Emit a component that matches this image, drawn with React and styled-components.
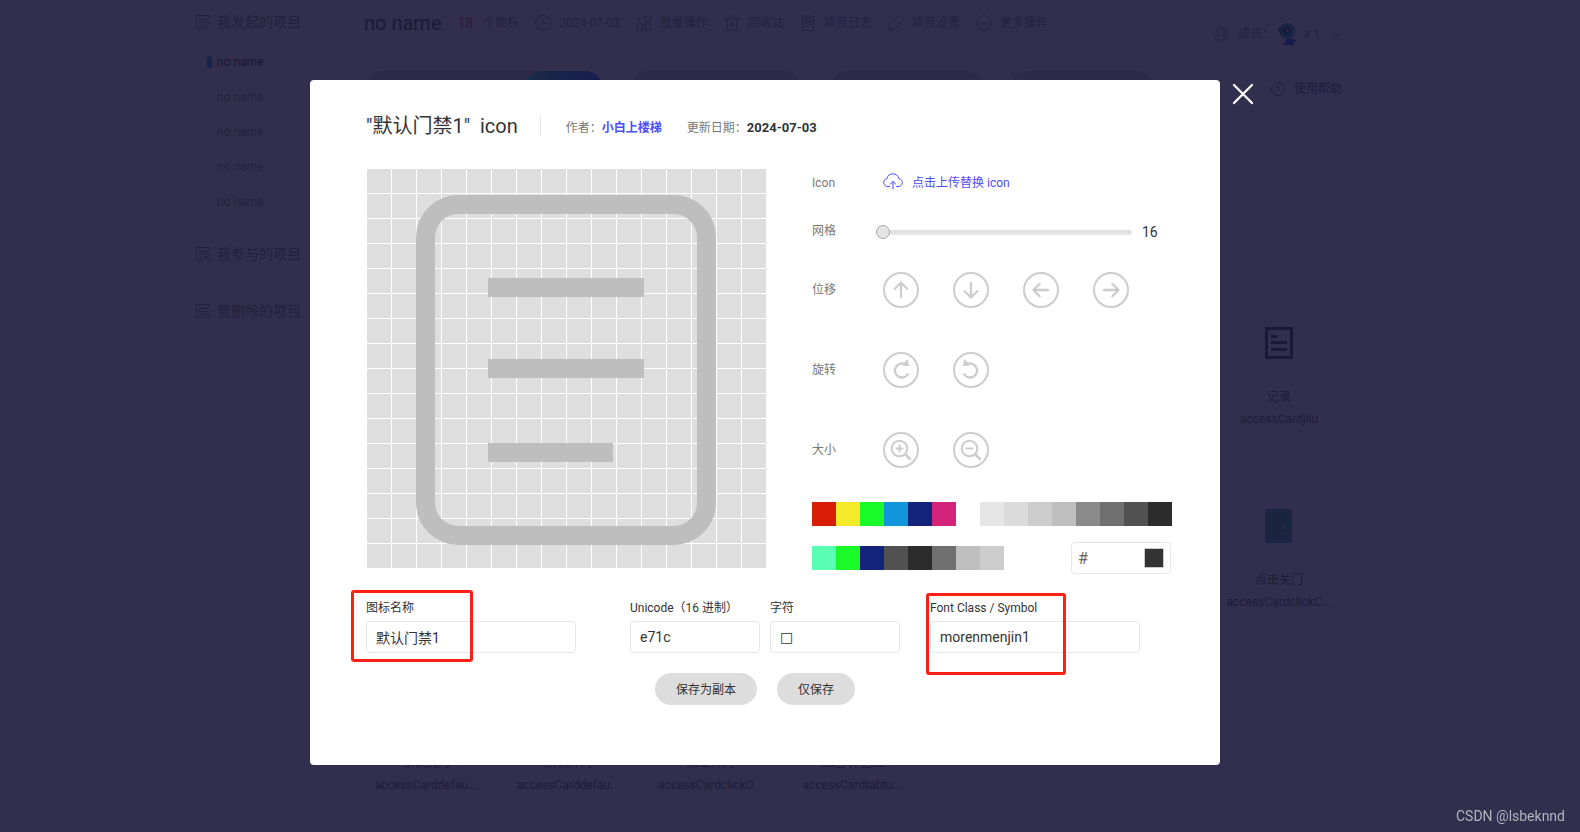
import React, { Fragment } from "react";
import styled, { createGlobalStyle } from "styled-components";

const GlobalStyle = createGlobalStyle`
  * {
    box-sizing: border-box;
  }
  body {
    margin: 0;
    background: #fff;
    font-family: Roboto, "Noto Sans CJK SC", sans-serif;
    font-size: 12px;
    line-height: 20px;
    color: #333;
  }
  button, input {
    font-family: inherit;
    color: inherit;
  }
  svg {
    display: block;
    flex: none;
  }
`;

/* ---------- project page ---------- */

const Page = styled.div`
  display: flex;
  justify-content: center;
  height: 100vh;
  overflow: hidden;
  padding: 12px 43px 0 0;
`;

const Sidebar = styled.nav`
  flex: none;
  width: 138px;
  border-right: 1px solid #eee;
`;

const Group = styled.section`
  margin-bottom: 25px;
`;

const GroupTitle = styled.h2`
  display: flex;
  align-items: center;
  gap: 6px;
  margin: 0;
  padding-bottom: 12px;
  font-size: 14px;
  font-weight: 400;
  line-height: 20px;
  color: #666;
`;

const ProjectList = styled.ul`
  list-style: none;
  margin: 0;
  padding: 0 0 0 12px;
`;

const Project = styled.li`
  display: flex;
  align-items: center;
  gap: 5px;
  height: 35px;
  color: ${props => (props.$active ? "#000" : "#666")};
  &::before {
    content: "";
    width: 5px;
    height: 12px;
    border-radius: 2px;
    background: ${props => (props.$active ? "linear-gradient(#1cc, #04f)" : "none")};
  }
`;

const Content = styled.main`
  flex: none;
  width: 1009px;
  padding-left: 31px;
`;

const TopBar = styled.header`
  display: flex;
  justify-content: space-between;
  height: 59px;
`;

const Toolbar = styled.div`
  display: flex;
  align-items: center;
  height: 22px;
  color: #666;
`;

const ProjectName = styled.h1`
  margin: 0 16px 0 0;
  font-size: 20px;
  font-weight: 400;
  color: #222;
`;

const Count = styled.span`
  margin-right: 10px;
  font-size: 14px;
  color: #f00;
`;

const Tool = styled.span`
  display: flex;
  align-items: center;
  gap: 8px;
  margin-left: 16px;
`;

const Members = styled.div`
  display: flex;
  align-items: center;
  gap: 8px;
  height: 22px;
  margin-top: 11px;
  color: #666;
`;

const MemberLabel = styled.span`
  display: flex;
  align-items: center;
  gap: 4px;
`;

const MemberCount = styled.span`
  margin-right: 4px;
`;

const TabBar = styled.div`
  display: flex;
  align-items: center;
  gap: 27px;
  height: 36px;
`;

const Tab = styled.div`
  display: flex;
  justify-content: flex-end;
  width: ${props => props.$width}px;
  height: 36px;
  border-radius: 18px;
  background: #ccc;
`;

const TabActive = styled.div`
  width: 79px;
  border-radius: 18px;
  background: linear-gradient(90deg, #0cc, #04f);
`;

const Help = styled.a`
  display: flex;
  align-items: center;
  gap: 9px;
  margin-left: auto;
  color: #333;
  text-decoration: none;
`;

const IconGrid = styled.div`
  display: grid;
  grid-template-columns: repeat(7, 1fr);
  grid-auto-rows: 183px;
  margin: 193px -8px 0 -9px;
`;

const IconCard = styled.div`
  grid-row: ${props => props.$row};
  grid-column: ${props => props.$column};
  display: flex;
  flex-direction: column;
  align-items: center;
  padding-top: 27px;
  line-height: 22px;
`;

const Glyph = styled.div`
  display: flex;
  align-items: center;
  height: 32px;
  margin-bottom: 27px;
`;

/* ---------- dialog ---------- */

const Mask = styled.div`
  position: fixed;
  inset: 0;
  display: flex;
  justify-content: center;
  align-items: flex-start;
  padding: 80px 50px 0 0;
  background: rgba(27, 24, 58, 0.9);
`;

const Dialog = styled.div`
  position: relative;
  width: 910px;
  padding: 31px 48px 60px 56px;
  border-radius: 4px;
  background: #fff;
`;

const Close = styled.button`
  position: absolute;
  top: 3px;
  left: 100%;
  margin-left: 12px;
  padding: 0;
  border: 0;
  background: none;
  color: #fff;
`;

const DialogHeader = styled.header`
  display: flex;
  align-items: center;
  height: 30px;
  margin-bottom: 28px;
  color: #777;
`;

const DialogTitle = styled.h2`
  margin: 0 22px 0 0;
  font-size: 20px;
  font-weight: 400;
  line-height: 30px;
  color: #333;
  white-space: pre;
`;

const Meta = styled.span`
  display: flex;
  align-items: center;
  margin-right: 25px;
  padding-top: 4px;
  strong {
    font-size: 13px;
    color: #333;
  }
  a {
    font-weight: 700;
    color: #4d4dff;
    text-decoration: none;
  }
`;

const Divider = styled.span`
  width: 1px;
  height: 20px;
  margin-right: 25px;
  background: #e6e6e6;
`;

const Editor = styled.div`
  display: flex;
  justify-content: space-between;
  align-items: flex-start;
  padding-left: 1px;
`;

const Canvas = styled.div`
  width: 399px;
  height: 399px;
  background-color: #dedede;
  background-image:
    linear-gradient(90deg, transparent 24px, #fff 24px),
    linear-gradient(transparent 24px, #fff 24px);
  background-size: 25px 25px;
`;

const Controls = styled.div`
  width: 360px;
`;

const ControlRow = styled.div`
  display: flex;
  align-items: center;
  height: ${props => props.$height || 80}px;
  margin-bottom: ${props => props.$after || 0}px;
`;

const ControlLabel = styled.label`
  width: 71px;
  color: #777;
`;

const Upload = styled.a`
  display: flex;
  align-items: center;
  gap: 9px;
  color: #4d4dff;
  text-decoration: none;
`;

const Slider = styled.input`
  appearance: none;
  width: 256px;
  height: 14px;
  margin: 2px 10px 0 -7px;
  background: none;
  &::-webkit-slider-runnable-track {
    height: 5px;
    border-radius: 3px;
    background: linear-gradient(#ddd, #e8e8e8);
  }
  &::-webkit-slider-thumb {
    appearance: none;
    width: 14px;
    height: 14px;
    margin-top: -5px;
    border: 1px solid #aaa;
    border-radius: 50%;
    background: #e4e4e4;
  }
`;

const SliderValue = styled.output`
  padding-top: 2px;
  font-size: 14px;
`;

const RoundButtons = styled.div`
  display: flex;
  gap: 34px;
`;

const RoundButton = styled.button`
  display: flex;
  align-items: center;
  justify-content: center;
  width: 36px;
  height: 36px;
  padding: 0;
  border: 2px solid #ccc;
  border-radius: 50%;
  background: none;
  color: #ccc;
`;

const Palette = styled.div`
  display: flex;
  justify-content: space-between;
  align-items: center;
  margin-top: ${props => props.$top}px;
`;

const Swatches = styled.div`
  display: flex;
`;

const Swatch = styled.button`
  width: 24px;
  height: 24px;
  padding: 0;
  border: 0;
  background: ${props => props.$color};
`;

const ColorBox = styled.div`
  display: flex;
  align-items: center;
  width: 100px;
  height: 32px;
  margin-right: 1px;
  padding: 0 6px;
  border: 1px solid #e6e6e6;
  border-radius: 4px;
`;

const ColorInput = styled.input`
  flex: 1;
  min-width: 0;
  padding: 0;
  border: 0;
  outline: 0;
  background: none;
  font-size: 16px;
  color: #666;
`;

const ColorPreview = styled.span`
  width: 20px;
  height: 20px;
  border: 1px solid #ccc;
  background: #333;
`;

const Fields = styled.div`
  display: flex;
  gap: 30px;
  margin-top: 24px;
`;

const FieldPair = styled.div`
  display: flex;
  gap: 10px;
  padding-left: 24px;
`;

const Field = styled.div`
  position: relative;
  width: ${props => props.$width}px;
`;

const FieldLabel = styled.label`
  display: block;
  margin-bottom: 3px;
  line-height: 20px;
  white-space: nowrap;
`;

const TextInput = styled.input`
  display: block;
  width: 100%;
  height: 32px;
  padding: 0 9px;
  border: 1px solid #e6e6e6;
  border-radius: 4px;
  background: #fff;
  font-size: 14px;
`;

const CharInput = styled(TextInput)`
  font-family: "DejaVu Sans", sans-serif;
`;

const Highlight = styled.span`
  position: absolute;
  top: ${props => props.$top}px;
  left: ${props => props.$left}px;
  width: ${props => props.$width}px;
  height: ${props => props.$height}px;
  border: 3px solid #ff2015;
  border-radius: 3px;
  pointer-events: none;
`;

const Actions = styled.footer`
  display: flex;
  justify-content: center;
  gap: 20px;
  margin-top: 20px;
  padding-right: 28px;
`;

const PillButton = styled.button`
  height: 32px;
  padding: 0 21px 2px;
  border: 0;
  border-radius: 16px;
  background: #ddd;
  font-size: 12px;
`;

const Watermark = styled.span`
  position: fixed;
  right: 15px;
  bottom: 6px;
  font-size: 14px;
  color: #b4b3be;
`;

/* ---------- icons ---------- */

const Svg = ({ size = 16, width, height, stroke = 1, children }) => (
  <svg
    width={width || size}
    height={height || size}
    viewBox={`0 0 ${width || size} ${height || size}`}
    fill="none"
    stroke="currentColor"
    strokeWidth={stroke}
    strokeLinecap="round"
    strokeLinejoin="round"
    aria-hidden="true"
  >
    {children}
  </svg>
);

const groupMarks = {
  edit: <path d="M8 14l.5-2.500 4.500-4.500 2 2-4.500 4.500z" />,
  user: <path d="M11.500 6.500a2.200 2.200 0 1 1 0 4.400 2.200 2.200 0 0 1 0-4.400zM8 15c.3-2.500 1.700-3.800 3.500-3.800S14.700 12.500 15 15" />,
  remove: <path d="M11.500 8a3.500 3.500 0 1 1 0 7 3.500 3.500 0 0 1 0-7zM10.200 10.200l2.600 2.600M12.800 10.200l-2.600 2.600" />,
};

const GroupIcon = ({ mark }) => (
  <Svg>
    <path d="M14.500 4.500v-3h-11c-1.500 0-2 .5-2 2v9c0 1.500.5 2 2 2h3M1 1.500h2M4.500 5.500h7M4.500 8.500h3M4.500 11.500h2" />
    {groupMarks[mark]}
  </Svg>
);

const ClockIcon = () => (
  <Svg>
    <circle cx="8" cy="8" r="7.500" />
    <path d="M8 4v4.500h3.500" />
  </Svg>
);

const BatchIcon = () => (
  <Svg>
    <path d="M1 3.500l2 2 4-4M9.500 1h5.500v4.500a1 1 0 0 1-1 1H9.500zM1 9h5.500v6H2a1 1 0 0 1-1-1zM9.500 9H14a1 1 0 0 1 1 1v4a1 1 0 0 1-1 1H9.500z" />
  </Svg>
);

const TrashIcon = () => (
  <Svg>
    <path d="M1.500 4h13M5 4c0-2 1-3 3-3s3 1 3 3M3 4l.8 11h8.400L13 4M8 7.500l2 3.500H6z" />
  </Svg>
);

const LogIcon = () => (
  <Svg>
    <path d="M5.500 2h-3v13.500h11V2h-3M5.500 .8h5v2.400h-5zM5 6.500h6M5 9h6M5 11.500h3" />
  </Svg>
);

const PenIcon = () => (
  <Svg>
    <path d="M1 15.500l.3-5L10 1.500c.8-.8 1.600-.8 2.400 0l2.100 2.100c.8.8.8 1.600 0 2.400L6 15zM1.300 10.500L6 15" />
  </Svg>
);

const MoreIcon = () => (
  <Svg>
    <circle cx="8" cy="8" r="7.500" />
    <path d="M4.800 8h.2M7.900 8h.2M11 8h.2" strokeWidth="1.500" />
  </Svg>
);

const MembersIcon = () => (
  <Svg>
    <path d="M7 1.500c2 0 3.300 1.400 3.300 3.500S9 8.800 8.700 9.300c-.3.800 3.800 1.300 3.800 3.200 0 1-.7 1.500-1.500 1.500H2.500c-.8 0-1.500-.5-1.500-1.500 0-1.900 4.600-2.400 4.300-3.200C5 8.800 3.700 7.100 3.700 5S5 1.500 7 1.500zM11 1.500c3 .5 2.500 5 1 7 0 1 3 1 3 3" />
  </Svg>
);

const Avatar = () => (
  <svg width="18" height="22" viewBox="0 0 18 22" aria-hidden="true">
    <path d="M5 22l4-6h6l3 1-3 5z" fill="#02f" />
    <circle cx="9.500" cy="8" r="8" fill="#09a" />
    <circle cx="3" cy="7" r="3" fill="#067" />
    <circle cx="9" cy="7.500" r="3.500" fill="#024" />
    <circle cx="9" cy="7.500" r="1.500" fill="#bbb" />
  </svg>
);

const RecordGlyph = () => (
  <svg width="28" height="32" viewBox="0 0 28 32" aria-hidden="true">
    <path d="M1.500 1.500h25v29h-25z" fill="none" stroke="#222" strokeWidth="3" />
    <path d="M6 8h7v3H6zM6 14h16v3H6zM6 21h16v3H6z" fill="#222" />
  </svg>
);

const DoorGlyph = () => (
  <svg width="28" height="34" viewBox="0 0 28 34" aria-hidden="true">
    <rect x="0" y="0" width="27" height="34" rx="3" fill="#1b9a80" />
    <path d="M2.500 2.500h22v29h-22z" fill="#0a9a70" stroke="#4ba" />
    <circle cx="20" cy="18" r="2" fill="#ccc" />
  </svg>
);

const Arrow = ({ turn }) => (
  <Svg size={32} stroke={2.3}>
    <path d="M16 23V8.500M9.800 14.700L16 8.500l6.200 6.200" transform={`rotate(${turn} 16 16)`} />
  </Svg>
);

const Rotate = ({ flip }) => (
  <Svg size={32} stroke={2.3}>
    <g transform={flip ? "translate(32 0) scale(-1 1)" : undefined}>
      <path d="M22.800 20.300a7 7 0 1 1-1.800-9.500" />
      <path d="M22.500 6l1 5.500-5.500-.5z" fill="currentColor" strokeWidth="1" />
    </g>
  </Svg>
);

const Magnifier = ({ plus }) => (
  <Svg size={32} stroke={2}>
    <circle cx="14.500" cy="14.500" r="7.800" />
    <path d="M20.500 20.500l4.500 4.500" strokeWidth="2.500" />
    <path d="M11.500 14.500h6" />
    {plus && <path d="M14.500 11.500v6" />}
  </Svg>
);

const DocumentDrawing = () => (
  <svg width="399" height="399" viewBox="0 0 399 399" aria-hidden="true">
    <rect x="58.500" y="35.500" width="281" height="331" rx="33" fill="none" stroke="#bebebe" strokeWidth="19" />
    <path d="M121 109h156v19H121zM121 190h156v19H121zM121 274h125v19H121z" fill="#bebebe" />
  </svg>
);

/* ---------- data ---------- */

const projects = ["no name", "no name", "no name", "no name", "no name"];

const tools = [
  { icon: <ClockIcon />, text: "2024-07-03" },
  { icon: <BatchIcon />, text: "批量操作" },
  { icon: <TrashIcon />, text: "回收站" },
  { icon: <LogIcon />, text: "项目日志" },
  { icon: <PenIcon />, text: "项目设置" },
  { icon: <MoreIcon />, text: "更多操作" },
];

const cards = [
  { row: 1, column: 7, name: "记录", code: "accessCardjilu", glyph: <RecordGlyph /> },
  { row: 2, column: 7, name: "点击关门", code: "accessCardclickC...", glyph: <DoorGlyph /> },
  { row: 3, column: 1, name: "默认关门", code: "accessCarddefau..." },
  { row: 3, column: 2, name: "默认开门", code: "accessCarddefau..." },
  { row: 3, column: 3, name: "点击开门", code: "accessCardclickO..." },
  { row: 3, column: 4, name: "tab_开门_02", code: "accessCardtabtu..." },
];

const brights = ["#d81e06", "#f4ea2a", "#1afa29", "#1296db", "#13227a", "#d4237a"];
const grays = ["#e6e6e6", "#dbdbdb", "#cdcdcd", "#bfbfbf", "#8a8a8a", "#707070", "#515151", "#2c2c2c"];
const recent = ["#5affb3", "#1afa29", "#13227a", "#515151", "#2c2c2c", "#707070", "#bfbfbf", "#cdcdcd"];

const SwatchRow = ({ colors }) => (
  <Swatches>
    {colors.map(color => (
      <Swatch key={color} type="button" $color={color} aria-label={color} />
    ))}
  </Swatches>
);

const ProjectPage = () => (
  <Page>
    <Sidebar>
      <Group>
        <GroupTitle><GroupIcon mark="edit" />我发起的项目</GroupTitle>
        <ProjectList>
          {projects.map((name, i) => (
            <Project key={i} $active={i === 0}>{name}</Project>
          ))}
        </ProjectList>
      </Group>
      <Group>
        <GroupTitle><GroupIcon mark="user" />我参与的项目</GroupTitle>
      </Group>
      <Group>
        <GroupTitle><GroupIcon mark="remove" />我删除的项目</GroupTitle>
      </Group>
    </Sidebar>
    <Content>
      <TopBar>
        <Toolbar>
          <ProjectName>no name</ProjectName>
          <Count>18</Count>
          <span>个图标</span>
          {tools.map(tool => (
            <Tool key={tool.text}>{tool.icon}<span>{tool.text}</span></Tool>
          ))}
        </Toolbar>
        <Members>
          <MembersIcon />
          <MemberLabel>成员：<Avatar /></MemberLabel>
          <MemberCount>x 1</MemberCount>
          <Svg width={10} height={6}><path d="M1 1l4 4 4-4" /></Svg>
        </Members>
      </TopBar>
      <TabBar>
        <Tab $width={239}><TabActive /></Tab>
        <Tab $width={172} />
        <Tab $width={154} />
        <Tab $width={145} />
        <Help href="#help">
          <Svg size={14}>
            <circle cx="7" cy="7" r="6.500" />
            <path d="M5.500 5.500c0-2 3-2 3 0C8.500 6.500 7 6.500 7 8M7 10v.1" />
          </Svg>
          使用帮助
        </Help>
      </TabBar>
      <IconGrid>
        {cards.map(card => (
          <IconCard key={`${card.row}-${card.column}`} $row={card.row} $column={card.column}>
            <Glyph>{card.glyph}</Glyph>
            <span>{card.name}</span>
            <span>{card.code}</span>
          </IconCard>
        ))}
      </IconGrid>
    </Content>
  </Page>
);

const IconDialog = () => (
  <Dialog role="dialog" aria-labelledby="dialog-title">
    <Close type="button" aria-label="关闭">
      <Svg size={22} stroke={2.3}><path d="M2 2l18 18M20 2L2 20" /></Svg>
    </Close>
    <DialogHeader>
      <DialogTitle id="dialog-title">{'"默认门禁1"  icon'}</DialogTitle>
      <Divider />
      <Meta>作者：<a href="#author">小白上楼梯</a></Meta>
      <Meta>更新日期：<strong>2024-07-03</strong></Meta>
    </DialogHeader>
    <Editor>
      <Canvas><DocumentDrawing /></Canvas>
      <Controls>
        <ControlRow $height={28} $after={15}>
          <ControlLabel as="span">Icon</ControlLabel>
          <Upload href="#upload">
            <Svg width={20} height={20}>
              <path d="M6.500 13.500H5c-2.500 0-4.300-1.600-4.300-4 0-2 1.300-3.500 3.200-3.900C4.500 2.700 6.800.8 9.800.8s5.400 1.900 6 4.800c2 .3 3.500 1.900 3.500 3.900 0 2.400-1.800 4-4.300 4h-1.500M10 16V8.500M7.200 11.200L10 8.500l2.800 2.700" />
            </Svg>
            点击上传替换 icon
          </Upload>
        </ControlRow>
        <ControlRow $height={38}>
          <ControlLabel htmlFor="grid">网格</ControlLabel>
          <Slider id="grid" type="range" min="16" max="64" defaultValue="16" />
          <SliderValue htmlFor="grid">16</SliderValue>
        </ControlRow>
        <ControlRow>
          <ControlLabel as="span">位移</ControlLabel>
          <RoundButtons>
            <RoundButton type="button" aria-label="上移"><Arrow turn={0} /></RoundButton>
            <RoundButton type="button" aria-label="下移"><Arrow turn={180} /></RoundButton>
            <RoundButton type="button" aria-label="左移"><Arrow turn={270} /></RoundButton>
            <RoundButton type="button" aria-label="右移"><Arrow turn={90} /></RoundButton>
          </RoundButtons>
        </ControlRow>
        <ControlRow>
          <ControlLabel as="span">旋转</ControlLabel>
          <RoundButtons>
            <RoundButton type="button" aria-label="顺时针"><Rotate /></RoundButton>
            <RoundButton type="button" aria-label="逆时针"><Rotate flip /></RoundButton>
          </RoundButtons>
        </ControlRow>
        <ControlRow>
          <ControlLabel as="span">大小</ControlLabel>
          <RoundButtons>
            <RoundButton type="button" aria-label="放大"><Magnifier plus /></RoundButton>
            <RoundButton type="button" aria-label="缩小"><Magnifier /></RoundButton>
          </RoundButtons>
        </ControlRow>
        <Palette $top={12}>
          <SwatchRow colors={brights} />
          <SwatchRow colors={grays} />
        </Palette>
        <Palette $top={16}>
          <SwatchRow colors={recent} />
          <ColorBox>
            <ColorInput aria-label="颜色" defaultValue="#" />
            <ColorPreview />
          </ColorBox>
        </Palette>
      </Controls>
    </Editor>
    <Fields>
      <Field $width={210}>
        <FieldLabel htmlFor="name">图标名称</FieldLabel>
        <TextInput id="name" defaultValue="默认门禁1" />
        <Highlight $top={-8} $left={-15} $width={122} $height={72} />
      </Field>
      <FieldPair>
        <Field $width={130}>
          <FieldLabel htmlFor="unicode">Unicode（16 进制）</FieldLabel>
          <TextInput id="unicode" defaultValue="e71c" />
        </Field>
        <Field $width={130}>
          <FieldLabel htmlFor="char">字符</FieldLabel>
          <CharInput id="char" defaultValue="□" />
        </Field>
      </FieldPair>
      <Field $width={210}>
        <FieldLabel htmlFor="symbol">Font Class / Symbol</FieldLabel>
        <TextInput id="symbol" defaultValue="morenmenjin1" />
        <Highlight $top={-5} $left={-4} $width={140} $height={82} />
      </Field>
    </Fields>
    <Actions>
      <PillButton type="button">保存为副本</PillButton>
      <PillButton type="button">仅保存</PillButton>
    </Actions>
  </Dialog>
);

const App = () => {
  return (
    <Fragment>
      <GlobalStyle />
      <ProjectPage />
      <Mask>
        <IconDialog />
      </Mask>
      <Watermark>CSDN @lsbeknnd</Watermark>
    </Fragment>
  )
}

export default App;
